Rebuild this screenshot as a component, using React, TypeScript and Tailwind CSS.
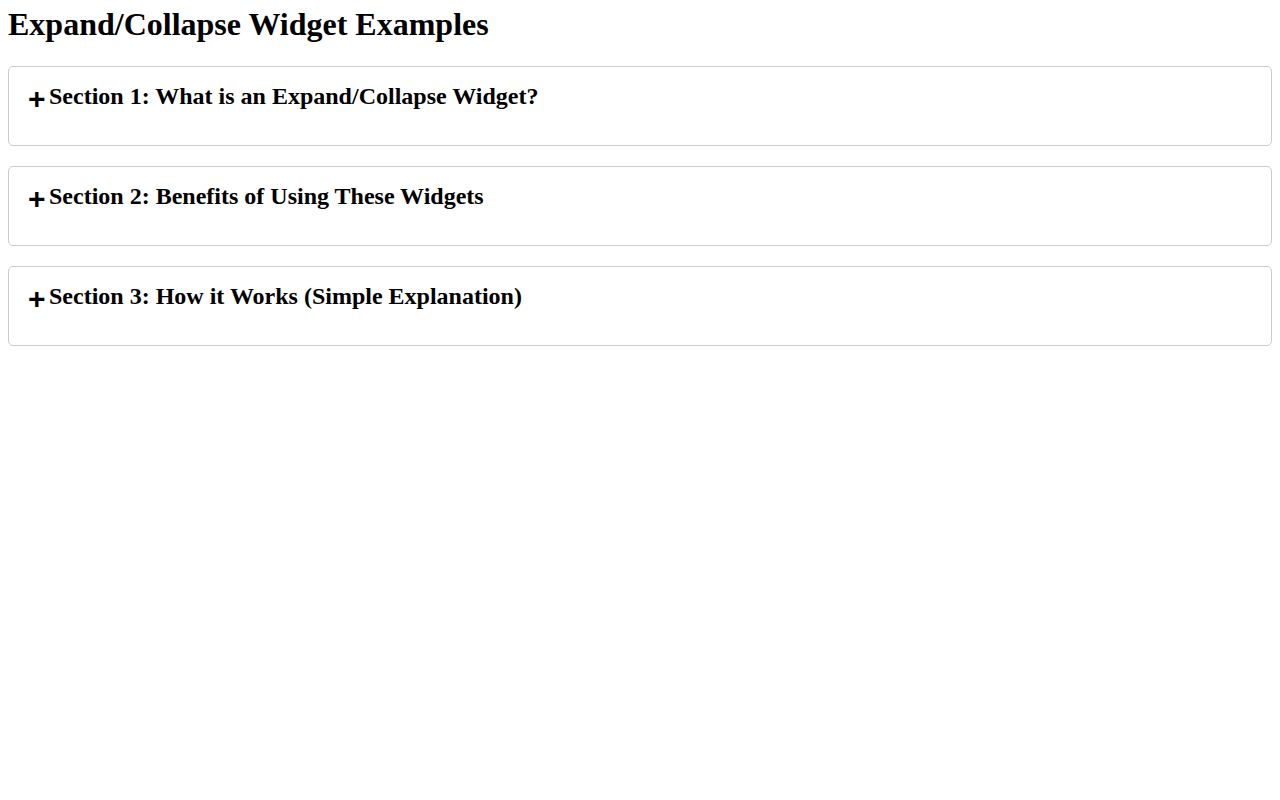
export default function App() {
  const sections = [
    "Section 1: What is an Expand/Collapse Widget?",
    "Section 2: Benefits of Using These Widgets",
    "Section 3: How it Works (Simple Explanation)",
  ];
  return (
    <div className="min-h-[800px] bg-white px-2 pt-[6px] text-black" style={{ fontFamily: '"Liberation Serif", "Times New Roman", serif' }}>
      <h1 className="m-0 text-[32px] font-bold leading-[37px]">Expand/Collapse Widget Examples</h1>
      <div className="mt-[23px] flex flex-col gap-5">
        {sections.map((s) => (
          <div key={s} className="h-[80px] rounded-[5px] border border-[#ccc] px-[19px] pt-[15px]">
            <div className="flex items-start">
              <span
                className="mt-[2px] w-[21px] text-[30px] font-bold leading-[30px]"
                style={{ fontFamily: '"Liberation Sans", Arial, sans-serif' }}
              >
                +
              </span>
              <h2 className="m-0 text-[24px] font-bold leading-[28px]">{s}</h2>
            </div>
          </div>
        ))}
      </div>
    </div>
  );
}
